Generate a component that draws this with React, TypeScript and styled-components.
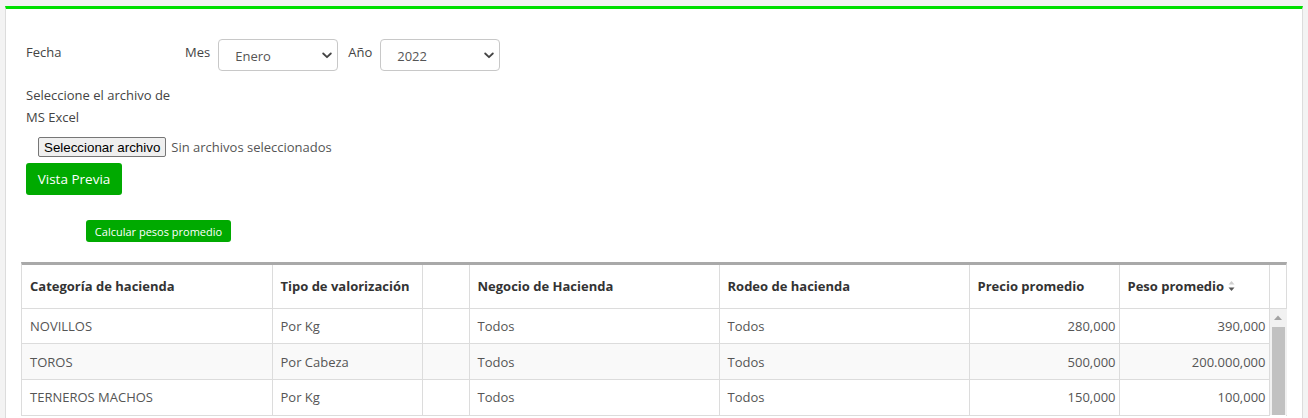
import React from "react";
import styled, { createGlobalStyle } from "styled-components";

const GlobalStyle = createGlobalStyle`
  html, body { margin: 0; padding: 0; }
  body {
    background: #f3f3f3;
    font-family: "Open Sans", "Liberation Sans", sans-serif;
    font-size: 13px;
    color: #444;
  }
  * { box-sizing: border-box; }
`;

const Page = styled.div`
  padding: 6px 5px 0 5px;
  height: 418px;
  overflow: hidden;
`;

const Panel = styled.div`
  background: #fff;
  border-top: 3px solid #00e000;
  border-left: 1px solid #dcdcdc;
  border-right: 1px solid #dcdcdc;
  padding: 30px 15px 0 15px;
  min-height: 420px;
`;

const Form = styled.div`
  padding-left: 5px;
  display: flex;
  flex-direction: column;
  align-items: flex-start;
`;

const FieldRow = styled.div`
  display: flex;
  align-items: flex-start;
`;

const RowLabel = styled.div<{ $w?: number }>`
  width: ${(p) => p.$w ?? 159}px;
  line-height: 18px;
  padding-top: 4px;
  color: #444;
`;

const InlineLabel = styled.label`
  line-height: 18px;
  padding-top: 4px;
  margin-right: 8px;
  color: #444;
`;

const SelectWrap = styled.div<{ $mr?: number }>`
  position: relative;
  width: 120px;
  height: 32px;
  margin-right: ${(p) => p.$mr ?? 0}px;
`;

const Select = styled.select`
  appearance: none;
  -webkit-appearance: none;
  width: 100%;
  height: 100%;
  border: 1px solid #c8c8c8;
  border-radius: 4px;
  background: #fff;
  padding: 2px 0 0 16px;
  font-family: "Open Sans", "Liberation Sans", sans-serif;
  font-size: 13px;
  color: #555;
  outline: none;
`;

const Chevron = styled.svg`
  position: absolute;
  right: 6px;
  top: 13px;
  width: 10px;
  height: 7px;
  pointer-events: none;
`;

const FileLabel = styled.div`
  width: 150px;
  line-height: 22px;
  margin-top: 13px;
  color: #444;
`;

const FileRow = styled.div`
  display: flex;
  align-items: center;
  margin-top: 9px;
  margin-left: 12px;
`;

const FileButton = styled.button`
  height: 20px;
  padding: 0 5px;
  border: 1px solid #767676;
  border-radius: 2px;
  background: #efefef;
  font-family: "Liberation Sans", Arial, sans-serif;
  font-size: 13.33px;
  color: #000;
  margin-right: 5px;
`;

const FileStatus = styled.span`
  color: #555;
  font-size: 13px;
`;

const GreenButton = styled.button<{ $small?: boolean }>`
  background: #00aa00;
  color: #fff;
  border: none;
  border-radius: 3px;
  font-family: "Open Sans", "Liberation Sans", sans-serif;
  font-size: ${(p) => (p.$small ? 11 : 13.5)}px;
  height: ${(p) => (p.$small ? 22 : 32)}px;
  width: ${(p) => (p.$small ? 145 : 96)}px;
  padding: 0;
  margin-top: ${(p) => (p.$small ? 25 : 6)}px;
  margin-left: ${(p) => (p.$small ? 60 : 0)}px;
`;

const TableWrap = styled.div`
  margin-top: 20px;
  border-top: 3px solid #a9a9a9;
  border-left: 1px solid #dcdcdc;
  border-right: 1px solid #dcdcdc;
  width: 1266px;
`;

const Table = styled.table`
  border-collapse: collapse;
  table-layout: fixed;
  width: 100%;
`;

const Th = styled.th`
  height: 43px;
  text-align: left;
  font-weight: 700;
  color: #333;
  font-size: 13px;
  padding: 0 8px;
  border-left: 1px solid #dcdcdc;
  border-bottom: 1px solid #dcdcdc;
  white-space: nowrap;
  &:first-child { border-left: none; }
`;

const Tr = styled.tr<{ $alt?: boolean }>`
  background: ${(p) => (p.$alt ? "#f9f9f9" : "#fff")};
`;

const Td = styled.td<{ $num?: boolean }>`
  height: 35.8px;
  padding: ${(p) => (p.$num ? "0 3px 0 8px" : "0 8px")};
  text-align: ${(p) => (p.$num ? "right" : "left")};
  color: #555;
  border-left: 1px solid #dcdcdc;
  border-bottom: 1px solid #dcdcdc;
  white-space: nowrap;
  &:first-child { border-left: none; }
`;

const ScrollCell = styled.td`
  padding: 0;
  border-left: 1px solid #dcdcdc;
  background: #f1f1f1;
  vertical-align: top;
`;

const ScrollArrow = styled.div`
  height: 18px;
  display: flex;
  align-items: center;
  justify-content: center;
`;

const ScrollThumb = styled.div`
  margin: 0 2px;
  height: 88px;
  background: #c1c1c1;
`;

const SortIcon = styled.svg`
  display: inline-block;
  vertical-align: middle;
  margin-left: 4px;
  margin-top: -3px;
`;

type Row = { cat: string; tipo: string; neg: string; rod: string; precio: string; peso: string };

const rows: Row[] = [
  { cat: "NOVILLOS", tipo: "Por Kg", neg: "Todos", rod: "Todos", precio: "280,000", peso: "390,000" },
  { cat: "TOROS", tipo: "Por Cabeza", neg: "Todos", rod: "Todos", precio: "500,000", peso: "200.000,000" },
  { cat: "TERNEROS MACHOS", tipo: "Por Kg", neg: "Todos", rod: "Todos", precio: "150,000", peso: "100,000" },
];

const ChevronIcon = () => (
  <Chevron viewBox="0 0 10 7">
    <path d="M1.2 1.5 L5 5.2 L8.8 1.5" fill="none" stroke="#444" strokeWidth="1.8" strokeLinecap="round" strokeLinejoin="round" />
  </Chevron>
);

export default function App() {
  return (
    <>
      <GlobalStyle />
      <Page>
        <Panel>
          <Form>
            <FieldRow>
              <RowLabel $w={159}>Fecha</RowLabel>
              <InlineLabel>Mes</InlineLabel>
              <SelectWrap $mr={10}>
                <Select defaultValue="Enero">
                  <option>Enero</option>
                  <option>Febrero</option>
                  <option>Marzo</option>
                </Select>
                <ChevronIcon />
              </SelectWrap>
              <InlineLabel>Año</InlineLabel>
              <SelectWrap>
                <Select defaultValue="2022">
                  <option>2021</option>
                  <option>2022</option>
                  <option>2023</option>
                </Select>
                <ChevronIcon />
              </SelectWrap>
            </FieldRow>
            <FileLabel>Seleccione el archivo de MS Excel</FileLabel>
            <FileRow>
              <FileButton type="button">Seleccionar archivo</FileButton>
              <FileStatus>Sin archivos seleccionados</FileStatus>
            </FileRow>
            <GreenButton type="button">Vista Previa</GreenButton>
            <GreenButton type="button" $small>Calcular pesos promedio</GreenButton>
          </Form>
          <TableWrap>
            <Table>
              <colgroup>
                <col style={{ width: 250 }} />
                <col style={{ width: 150 }} />
                <col style={{ width: 47 }} />
                <col style={{ width: 250 }} />
                <col style={{ width: 250 }} />
                <col style={{ width: 150 }} />
                <col style={{ width: 150 }} />
                <col style={{ width: 18 }} />
              </colgroup>
              <thead>
                <tr>
                  <Th>Categoría de hacienda</Th>
                  <Th>Tipo de valorización</Th>
                  <Th />
                  <Th>Negocio de Hacienda</Th>
                  <Th>Rodeo de hacienda</Th>
                  <Th>Precio promedio</Th>
                  <Th>
                    Peso promedio
                    <SortIcon width="7" height="12" viewBox="0 0 7 12">
                      <path d="M0.5 4.5 L3.5 1 L6.5 4.5 Z" fill="#cfcfcf" />
                      <path d="M0.5 7.5 L3.5 11 L6.5 7.5 Z" fill="#555" />
                    </SortIcon>
                  </Th>
                  <Th />
                </tr>
              </thead>
              <tbody>
                {rows.map((r, i) => (
                  <Tr key={r.cat} $alt={i % 2 === 1}>
                    <Td>{r.cat}</Td>
                    <Td>{r.tipo}</Td>
                    <Td />
                    <Td>{r.neg}</Td>
                    <Td>{r.rod}</Td>
                    <Td $num>{r.precio}</Td>
                    <Td $num>{r.peso}</Td>
                    {i === 0 && (
                      <ScrollCell rowSpan={rows.length}>
                        <ScrollArrow>
                          <svg width="8" height="5" viewBox="0 0 8 5">
                            <path d="M0 5 L4 0.5 L8 5 Z" fill="#a3a3a3" />
                          </svg>
                        </ScrollArrow>
                        <ScrollThumb />
                      </ScrollCell>
                    )}
                  </Tr>
                ))}
              </tbody>
            </Table>
          </TableWrap>
        </Panel>
      </Page>
    </>
  );
}
